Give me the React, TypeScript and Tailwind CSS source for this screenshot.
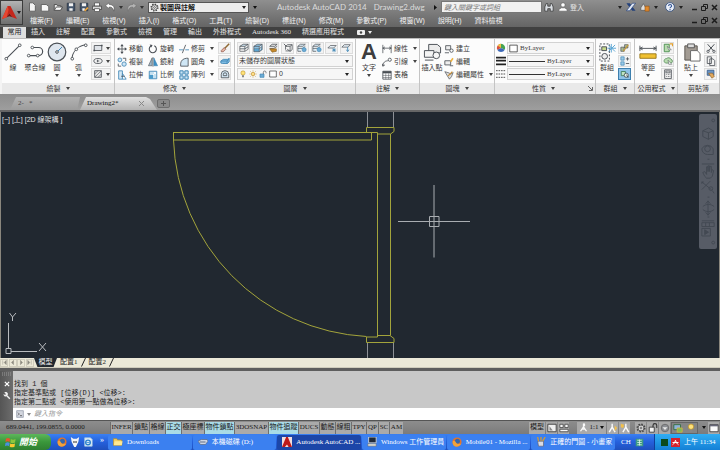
import type { ReactNode } from "react";

const CJK = "font-['Liberation_Sans','Noto_Sans_CJK_TC',sans-serif]";
const SERIF = "font-['Liberation_Serif','Noto_Sans_CJK_TC',serif]";
const MONO = "font-['Liberation_Mono','Noto_Sans_CJK_TC',monospace]";

const blue = "#3f86b5";
const dark = "#4a4f55";

/* Small tool glyphs, all drawn on a 12 x 12 grid. */
const glyphs: Record<string, ReactNode> = {
  new: <path d="M3 1h4l3 3v7H3z" fill="#f4f4f4" stroke="#555" />,
  sheet: <path d="M1.500 3h6l3 2.500V11h-9z" fill="#f7f7f7" stroke="#555" />,
  open: <><path d="M1.500 10V3h3l1 1.500h4V6" fill="#e8e8e8" stroke="#444" /><path d="M1.500 10l2.500-4h7.500L9 10z" fill="#fafafa" stroke="#444" /></>,
  save: <><path d="M1.500 1.500h9v9h-9z" fill="#43546a" stroke="#2b3646" /><path d="M3.500 1.500h5v3.500h-5zM4 7.500h4v3H4z" fill="#f1f1f1" /></>,
  saveas: <><path d="M1.500 1.500h9v9h-9z" fill="#43546a" stroke="#2b3646" /><path d="M3.500 1.500h5v3.500h-5zM4 7.500h3v3H4z" fill="#f1f1f1" /><path d="M6 10l4-4 1.500 1.500-4 4z" fill="#e9a23b" /></>,
  print: <><path d="M3 1h6v4H3z" fill="#fff" stroke="#555" /><path d="M.5 5h11v4H.5z" fill="#d8d8d8" stroke="#444" /><path d="M3 8h6v3.500H3z" fill="#fff" stroke="#555" /></>,
  undo: <path d="M5 1L.5 4.500 5 8V6c3 0 4.500 1 5.500 5 1.500-4 0-8-5.500-8z" fill="#fff" stroke="#555" strokeWidth=".7" />,
  redo: <path d="M7 1l4.500 3.500L7 8V6C4 6 2.500 7 1.500 11 0 7 1.500 3 7 3z" fill="#b4b4b4" stroke="#707070" strokeWidth=".7" />,
  gear: <><circle cx="6" cy="6" r="4.500" fill="none" stroke="#444" strokeWidth="1.800" strokeDasharray="1.900 1.600" /><circle cx="6" cy="6" r="3.500" fill="#eee" stroke="#444" /><circle cx="6" cy="6" r="1.200" fill="#fff" stroke="#444" /></>,
  rect: <><path d="M1.500 3h9v6h-9z" fill="#dfe3e8" stroke={dark} /><path d="M.5 8h2v2h-2zM9.500 2h2v2h-2z" fill={dark} /></>,
  ellipse: <><ellipse cx="6" cy="6" rx="5" ry="3" fill="none" stroke={dark} /><path d="M5.500 4.500v3M4.500 6h3" stroke={dark} /></>,
  hatch: <><path d="M2 2h8v8H2z" fill="#e4e4e4" stroke={dark} /><path d="M2 6l4-4M2 10l8-8M6 10l4-4" stroke={dark} strokeWidth=".7" /></>,
  move: <><path d="M6 1v10M1 6h10" stroke={dark} /><path d="M6 0L4 2.700h4zM6 12L4 9.300h4zM0 6l2.700-2v4zM12 6L9.300 4v4z" fill={dark} /></>,
  rotate: <><path d="M7.500 2.200A4.300 4.300 0 1 1 3.500 2.500" fill="none" stroke={dark} strokeWidth="1.300" /><path d="M2 .5l3.500.7-1.500 3z" fill={dark} /></>,
  trim: <><path d="M0 7h5M7.500 7H12" stroke={blue} /><path d="M4 11L8 1" stroke={dark} /></>,
  copy: <><circle cx="3.500" cy="3.500" r="2.300" fill="#cfe6f5" stroke={blue} /><circle cx="8.500" cy="8.500" r="2.600" fill="#cfe6f5" stroke={blue} /><path d="M7 1.500h3.500V5M1.500 8v3H5" fill="none" stroke={dark} /></>,
  mirror: <><path d="M5 1v9.500H.5z" fill="#9fb7c8" stroke={dark} strokeWidth=".7" /><path d="M7 1v9.500h4.500z" fill="#3c8fc4" stroke={blue} strokeWidth=".7" /><path d="M6 0v12" stroke={dark} strokeWidth=".6" /></>,
  fillet: <path d="M2 11V7.500C2.500 4 5 2 9 1.500h2V11z" fill="#cfe6f5" stroke={dark} />,
  stretch: <><path d="M2 1h4.500v10H2z" fill="#d5e9f5" stroke={blue} /><path d="M6.500 4L11 11H6.500z" fill="#fff" stroke={blue} /><path d="M5 7.500h4" stroke={dark} /></>,
  scale: <><path d="M1.500 1.500h9v9h-9z" fill="#c5e0f0" stroke={blue} /><path d="M1.500 6h4.500v4.500H1.500z" fill="#4a9aca" /><path d="M6 6l3-3M7 3h2v2" fill="none" stroke="#fff" /></>,
  array: <path d="M1 1h4v4H1zM7 1h4v4H7zM1 7h4v4H1zM7 7h4v4H7z" fill="#cbe4f4" stroke={blue} strokeWidth="1.200" />,
  erase: <><path d="M11 1L5.500 6.500" stroke="#8f6a34" strokeWidth="1.800" /><path d="M5 5.500L7 7.500l-3 3H1.500V9z" fill="#e4b2a0" stroke="#7c4034" strokeWidth=".7" /></>,
  explode: <><path d="M1 6l3-2 5 0 2-1v4l-2 2H3L1 8.500z" fill="#7dbbe2" stroke={blue} /><path d="M1 6h7.500L11 3M8.500 6v3" stroke={blue} fill="none" /></>,
  offset: <path d="M1.500 10.500v-4a4.500 4.500 0 0 1 9 0v4zM4 8V6.500a2 2 0 0 1 4 0V8z" fill="#d6e9f5" stroke={dark} />,
  layers: <><path d="M1 4l4-2.500h6L7 4zM1 7l6 0 4-2.500" fill="#cfe4f2" stroke={dark} strokeWidth=".9" /><path d="M1 10h6l4-2.500M1 4v6M7 4v6M11 1.500v6" fill="none" stroke={dark} strokeWidth=".8" /></>,
  layersBlue: <><path d="M1 4l4-2.500h6L7.500 4zM1 4v3h6.500V4M7.500 7L11 4.500v-3" fill="#8fc2e2" stroke={dark} strokeWidth=".8" /><path d="M1 7v3.500h6.500V7M7.500 10.500L11 8V4.500" fill="#5aa3d0" stroke={dark} strokeWidth=".8" /></>,
  layersGold: <><path d="M2 4l3-2.500h6L8 4zM2 6.500h5l4-2.500" fill="#e6e6e6" stroke={dark} strokeWidth=".9" /><path d="M2 7l3 4 5-1V7z" fill="#c98b2b" stroke="#7b5418" strokeWidth=".7" /></>,
  layersOff: <><path d="M3 4l2.500-2h5.500L8.500 4zM3 4v4M8.500 4v6L11 8V2M3 9.500h5.500" fill="none" stroke={dark} strokeWidth=".9" /><path d="M1 1l3 3M5 7l3 3" stroke={dark} /></>,
  layersBulb: <><path d="M1 4l3-2.500h6L7 4zM1 6.500h6l3-2.500M1 4v6h4" fill="#d7e9f4" stroke={dark} strokeWidth=".8" /><circle cx="8.500" cy="8" r="2.500" fill="#6aaad3" stroke={blue} strokeWidth=".7" /></>,
  layersSnow: <><path d="M1 6l3-3h7L8 6z" fill="#e6eff5" stroke={dark} strokeWidth=".8" /><path d="M6 8.500h5M8.500 6v5M6.800 6.800l3.400 3.400M10.200 6.800L6.800 10.200" stroke={blue} strokeWidth=".9" /></>,
  layersLock: <><path d="M1 5l3-3h7L8.500 5z" fill="#e6eff5" stroke={dark} strokeWidth=".8" /><path d="M8 5v4.500M6.500 8L8 10.500 9.500 8" stroke={blue} fill="none" /></>,
  bulb: <><circle cx="6" cy="4.500" r="3.200" fill="#ffe27a" stroke="#b58a1c" strokeWidth=".8" /><path d="M4.500 8h3v3h-3z" fill="#888" /></>,
  sun: <><circle cx="6" cy="6" r="2.500" fill="#ffe08a" stroke="#c59631" /><path d="M6 .5v2M6 9.500v2M.5 6h2M9.500 6h2M2 2l1.500 1.500M8.500 8.500L10 10M10 2L8.500 3.500M2 10l1.500-1.500" stroke="#c59631" strokeWidth=".9" /></>,
  unlock: <><path d="M1.500 6h6v5h-6z" fill="#6cacd4" stroke={blue} /><path d="M6.500 6V3.500a2 2 0 0 1 4 0V5" fill="none" stroke={dark} /></>,
  swatch: <path d="M1 1.500h10v9H1z" fill="#fff" stroke="#333" />,
  dim: <path d="M1 1v10M11 1v10M1 5h10M3.500 3.500L1 5l2.500 1.500M8.500 3.500L11 5 8.500 6.500" fill="none" stroke={dark} strokeWidth=".9" />,
  leader: <><path d="M1 11c1-5 2-6 6-6.500M.5 8l.5 3 2.500-1.500" fill="none" stroke={dark} /><circle cx="9.300" cy="3.300" r="1.900" fill="none" stroke={dark} /></>,
  table: <><path d="M1 1.500h10v9.500H1z" fill="#fff" stroke={dark} /><path d="M1 1.500h10V4H1z" fill={dark} /><path d="M1 6.500h10M1 9h10M4.500 4v7M8 4v7" stroke={dark} strokeWidth=".6" /></>,
  block: <><path d="M2 2h6v5H2z" fill="#eee" stroke={dark} /><circle cx="9" cy="8" r="2" fill="#fff" stroke={dark} /><path d="M1 10.500h5" stroke={dark} /></>,
  blockEdit: <><path d="M1 4.500h7v5H1z" fill="#eee" stroke={dark} /><path d="M7 5l3-4 1.500 1L9 6z" fill="#f0b23d" /><path d="M7 10.500h4" stroke={dark} /></>,
  attr: <><path d="M1 2l3 5 2.500 4L9 8l2-5-3 2-2-1.500z" fill="#dcdcdc" stroke={dark} strokeWidth=".8" /><path d="M5 7l5-5" stroke="#c98b2b" strokeWidth="1.300" /></>,
  groupEdit: <><path d="M1 5h4v5H1zM5.500 2h4v4h-4z" fill="#a9b98f" stroke={dark} strokeWidth=".8" /><path d="M4 10l6-8" stroke="#c69a3c" strokeWidth="1.400" /></>,
  groupAdd: <><path d="M1 1h4v4H1zM1 7h4v4H1z" fill="#9cc9e6" stroke={blue} strokeWidth=".8" /><path d="M7 3.500h4M9 1.500v4M7 9h4" stroke={dark} /></>,
  groupSel: <><path d="M1.500 3h5v5h-5z" fill="#bfe3c4" stroke="#3c7a56" /><circle cx="7.500" cy="7.500" r="2.500" fill="#e9f5ea" stroke={dark} /><path d="M7 6l4 4-2 .3z" fill={dark} /></>,
  pick: <><path d="M1.500 1.500h6v9h-6z" fill="#b9dcb0" stroke="#3f8745" /><path d="M5 4l5 4-3 .3z" fill="#fff" stroke={dark} strokeWidth=".6" /><path d="M8 1h3.500v3" stroke="#e5a12d" strokeWidth="1.500" fill="none" /></>,
  cloud: <><path d="M1.500 7a3 3 0 0 1 3-4 3 3 0 0 1 5 1 2.300 2.300 0 0 1 0 4.500H3z" fill="#b9dcb0" stroke="#3f7b45" strokeWidth=".8" /><path d="M6 5l4.500 5H7z" fill="#fff" stroke={dark} strokeWidth=".6" /></>,
  calc: <><path d="M2 1h8v10.500H2z" fill="#eee" stroke={dark} /><path d="M3.500 2.500h5v2h-5zM4 6.500h1M6 6.500h1M8 6.500h.7M4 9h1M6 9h1M8 9h.7" stroke={dark} fill="#fff" strokeWidth=".9" /></>,
  cut: <><path d="M2 1.500l7 8M10 1.500l-7 8" stroke={dark} strokeWidth="1.200" /><circle cx="2.500" cy="10" r="1.400" fill="none" stroke={dark} /><circle cx="9.500" cy="10" r="1.400" fill="none" stroke={dark} /></>,
  copyclip: <path d="M1.500 1h5v8h-5zM4.500 3.500h4l2 2v6h-6z" fill="#f4f4f4" stroke={dark} />,
  matchprop: <><path d="M1.500 1.500h8v6h-8z" fill="#6b94c5" stroke="#365b8a" /><path d="M3 5l4 6 3-2-2-4z" fill="#e2a95f" stroke="#865c22" strokeWidth=".7" /></>,
  wheel: <><path d="M6 6V1a5 5 0 0 1 4.500 7z" fill="#46a352" /><path d="M6 6l4.500 2a5 5 0 0 1-9 0z" fill="#3c68b8" /><path d="M6 6L1.500 8A5 5 0 0 1 6 1z" fill="#d8523d" /><path d="M6 1a5 5 0 0 0-4 2l4 3z" fill="#efc445" /></>,
  lines: <path d="M0 2h12M0 5.500h12M0 10h12" stroke="#222" strokeWidth="2" />,
  dashes: <path d="M0 2h12M0 6h12M0 10h12" stroke="#555" strokeWidth="1.200" strokeDasharray="2 1" />,
  search: <path d="M1 11V6l1.500-4h2V5h3V2h2L11 6v5H7.500V8h-3v3z" fill="#d9dde2" stroke="#333" strokeWidth=".9" />,
  user: <><circle cx="6" cy="3.500" r="2.600" fill="#fff" stroke="#555" strokeWidth=".7" /><path d="M1 11V9l3-2h4l3 2v2z" fill="#fff" stroke="#555" strokeWidth=".7" /></>,
  exchange: <><path d="M.5 1.500h4L11.500 10.500h-4z" fill="#23407a" /><path d="M11.500 1.500h-4L.5 10.500h4z" fill="#dfe7f4" stroke="#23407a" strokeWidth=".8" /></>,
  house: <><path d="M1 10V7l3-5 3 5v3z" fill="#ddd" stroke="#555" strokeWidth=".8" /><path d="M6 5h5v6H6z" fill="#e08a2e" stroke="#8e4f12" strokeWidth=".7" /></>,
  help: <><circle cx="6" cy="6" r="5.300" fill="#e9eef7" stroke="#36527f" strokeWidth="1" /><path d="M4.300 4.800c0-2.400 3.600-2.400 3.600 0C7.900 6.200 6 6 6 7.500M6 8.500v1.300" fill="none" stroke="#2b4f93" strokeWidth="1.300" /></>,
  wrench: <path d="M2 1a3 3 0 0 1 4.500 4l4.500 4.500-1.500 1.500L5 6.500A3 3 0 0 1 1 3l2 1.500L4.500 3z" fill="#f1f1f1" />,
  prompt: <><path d="M1 1h10v10H1z" fill="#d4d7df" stroke="#888fa0" /><path d="M3 4l2 2-2 2M6 8.500h3" fill="none" stroke="#333" /></>,
  page: <><path d="M1 1.500h10v9H1z" fill="#eee" stroke="#333" /><path d="M3 9V4l4 5z" fill="#888" /></>,
  tiles: <path d="M1 1.500h4v4H1zM7 1.500h4v4H7zM1 7.500h10v3H1z" fill="#f5f5f5" stroke="#444" />,
  scaleA: <path d="M6 1v4L2 11M6 5l4 6M4 8h4M6 1a1 1 0 0 1 0 3" fill="none" stroke="#fafafa" strokeWidth="1.700" />,
  scaleGold: <><path d="M5 1v4L1.500 11M5 5l3.500 6" fill="none" stroke="#fafafa" strokeWidth="1.700" /><path d="M8 3l3 3-3 4z" fill="#f1bf4b" /></>,
  scaleAuto: <><path d="M7 1v4L3.500 11M7 5l3.500 6" fill="none" stroke="#fafafa" strokeWidth="1.700" /><path d="M1 1l4 1-1 4-3-1z" fill="#f1bf4b" /></>,
  padlock: <><path d="M1.500 5h6v6h-6z" fill="#f4f4f4" stroke="#333" /><path d="M6 5V3a2 2 0 0 1 4.500 0v3" fill="none" stroke="#333" strokeWidth="1.300" /></>,
  orb: <><circle cx="6" cy="6" r="4.500" fill="#8c8f94" stroke="#666" /><path d="M3 5h6L6 8.500z" fill="#e8e8e8" /></>,
  monitor: <><path d="M1 2h8v6H1z" fill="#8db2d9" stroke="#2f6b36" /><path d="M5 6h6v5H5z" fill="#7cba5b" stroke="#d5b240" /></>,
  clean: <><path d="M1 2h10v8.500H1z" fill="#fafafa" stroke="#333" /><path d="M1 2h10v2H1z" fill="#667" /></>,
  folder: <><path d="M.5 10V2h4l1 1.500h5V10z" fill="#f3cf62" stroke="#b98d22" strokeWidth=".8" /><path d="M1 10l1-5h9.500l-1 5z" fill="#ffe891" /></>,
  disk: <><path d="M0 5l4-2h7l1 2-3 4H3z" fill="#cdd6e3" stroke="#51627e" strokeWidth=".8" /><path d="M2 6h7" stroke="#4a5a77" /></>,
  acad: <><path d="M0 0h12v12H0z" fill="#f0dede" /><path d="M0 12L5 0h2l5 12H8L6 9 3.500 12z" fill="#bf1a1a" /></>,
  task: <><path d="M2 0h9v7H2z" fill="#202a38" stroke="#d9dde3" /><path d="M1 8h10v3H1z" fill="#dcdcd2" stroke="#666" strokeWidth=".6" /></>,
  firefox: <><circle cx="6" cy="6" r="5.500" fill="#e3742a" /><circle cx="6.500" cy="5" r="3" fill="#3468ad" /><path d="M1 5c2-1 3 0 4 2s3 1 5 1-1 3-4 3.500S0 9 1 5z" fill="#f2a23b" /></>,
  paint: <><path d="M2 5h7v6H3z" fill="#d8dbe4" stroke="#556" strokeWidth=".7" /><path d="M3 5L2 0M6 5V0M8 5l3-5" stroke="#d99a2e" strokeWidth="1.500" /></>,
  fox: <><path d="M1 0l3 2h4l3-2-1 6-3 6H5L2 6z" fill="#f4f4f4" /><path d="M4 5h1.500v2H4zM6.500 5H8v2H6.500z" fill="#222" /></>,
  ie: <><path d="M2 1h7l2 2v8H2z" fill="#e7f1fa" stroke="#9cc0df" /><circle cx="6" cy="6.500" r="2.800" fill="none" stroke="#2c83cd" strokeWidth="1.600" /><path d="M4 6.500h4" stroke="#2c83cd" /></>,
  ime: <><path d="M1 1h10v10H1z" fill="#3f9b83" /><path d="M3 3h6M3 6h6M6 2v8M3 9h6" stroke="#e4f7ef" /></>,
  green: <path d="M0 0h12v12H0z" fill="#0b4a1c" />,
  avira: <><path d="M0 0h12v12H0z" fill="#d5222d" /><path d="M2 9c2-1 3-3 4-6 1 3 2 5 4 6M2 6h8" fill="none" stroke="#fff" strokeWidth="1.300" /></>,
};

function Icon({ name, cls = "size-[10px]" }: { name: string; cls?: string }) {
  return (
    <svg viewBox="0 0 12 12" className={`${cls} shrink-0`} fill="none" aria-hidden="true">
      {glyphs[name]}
    </svg>
  );
}

function Caret({ cls = "text-[#444]" }: { cls?: string }) {
  return (
    <svg viewBox="0 0 4 3" className={`h-[3px] w-[4px] shrink-0 ${cls}`} aria-hidden="true">
      <path d="M0 0h4L2 3z" fill="currentColor" />
    </svg>
  );
}

function Panel({ title, width, children, more = true, corner = false }: { title: string; width: string; children: ReactNode; more?: boolean; corner?: boolean }) {
  return (
    <section className={`flex shrink-0 flex-col border-r border-[#c4c4c4] ${width}`}>
      <div className="flex h-[44px] bg-[#fcfcfc] pt-[3px]">{children}</div>
      <div className="flex h-[11px] items-center justify-center gap-[5px] bg-[#e9e9e9] text-[#333]">
        {corner && <span className="w-[32px]" />}
        <span>{title}</span>
        {more && <Caret />}
        {corner && (
          <button aria-label="性質對話方塊" className="ml-auto mr-[2px]">
            <svg viewBox="0 0 5 5" className="size-[5px]"><path d="M0 0l4 4M4.500 1v3.500H1" fill="none" stroke="#666" /></svg>
          </button>
        )}
      </div>
    </section>
  );
}

function Tool({ icon, label, caret, cls = "" }: { icon: string; label: string; caret?: boolean; cls?: string }) {
  return (
    <button className={`flex h-[13px] items-center gap-[2px] whitespace-nowrap ${cls}`}>
      <Icon name={icon} />
      <span>{label}</span>
      {caret && <span className="ml-[3px] flex"><Caret /></span>}
    </button>
  );
}

function SmallTool({ icon, active, caret }: { icon: string; active?: boolean; caret?: boolean }) {
  return (
    <button
      aria-label={icon}
      className={`flex h-[12px] items-center justify-center gap-[3px] border ${caret ? "w-[20px]" : "w-[13px]"} ${active ? "border-[#3d7fae] bg-[#8fc3e8]" : "border-[#dcdcdc] bg-[#f3f3f3]"}`}
    >
      <Icon name={icon} />
      {caret && <Caret />}
    </button>
  );
}

function BigTool({ label, caret, width, children }: { label: string; caret?: boolean; width: string; children: ReactNode }) {
  return (
    <button className={`flex h-[38px] flex-col items-center ${width}`}>
      <span className="flex h-[20px] items-center justify-center">{children}</span>
      <span className="mt-[1px] h-[9px] whitespace-nowrap leading-[9px]">{label}</span>
      {caret && <span className="mt-[2px] flex"><Caret /></span>}
    </button>
  );
}

function Field({ label, value, children, cls = "" }: { label: string; value: string; children?: ReactNode; cls?: string }) {
  return (
    <div className={`flex h-[12px] items-center gap-[2px] border border-[#d2d2d2] bg-[#f6f6f6] px-[1px] ${cls}`}>
      {children}
      <select aria-label={label} className="h-[10px] min-w-0 flex-1 appearance-none bg-transparent leading-[10px] outline-none">
        <option>{value}</option>
      </select>
      <Caret cls="text-[#222] mr-[2px]" />
    </div>
  );
}

function WindowButtons() {
  return (
    <div className="flex items-center gap-[3px] pr-[2px]">
      <button aria-label="最小化">
        <svg viewBox="0 0 7 7" className="size-[7px]"><path d="M1 5.500h5" stroke="#1c1c1c" strokeWidth="1.500" /></svg>
      </button>
      <button aria-label="還原">
        <svg viewBox="0 0 7 7" className="size-[7px]" fill="none"><path d="M2.500 2.500v-2h4v4h-2M.5 2.500h4v4h-4z" stroke="#1c1c1c" /></svg>
      </button>
      <button aria-label="關閉">
        <svg viewBox="0 0 7 7" className="size-[7px]"><path d="M1 1l5 5M6 1L1 6" stroke="#1c1c1c" strokeWidth="1.500" /></svg>
      </button>
    </div>
  );
}

const menus = ["檔案(F)", "編輯(E)", "檢視(V)", "插入(I)", "格式(O)", "工具(T)", "繪製(D)", "標註(N)", "修改(M)", "參數式(P)", "視窗(W)", "說明(H)", "資料檢視"];
const ribbonTabs = ["插入", "註解", "配置", "參數式", "檢視", "管理", "輸出", "外掛程式", "Autodesk 360", "精選應用程式"];
const quick = ["new", "sheet", "open", "save", "saveas", "print", "undo"];

function Header() {
  return (
    <header className="flex bg-linear-to-b from-[#8f8f8f] to-[#656565]">
      <button aria-label="應用程式功能表" className="flex h-[25px] w-[23px] shrink-0 items-center border border-[#3c3c3c] bg-linear-to-b from-[#b4b4b4] to-[#6e6e6e]">
        <svg viewBox="0 0 16 16" className="ml-[1px] size-[15px]">
          <path d="M0 15L6 1h3l7 14-5-2-3-4-3 4z" fill="#c5271b" />
          <path d="M6 1L0 15l5-2 2-8z" fill="#e8452f" />
          <path d="M5 13l3-4 3 4-3-1z" fill="#74100b" />
        </svg>
        <Caret cls="text-[#222]" />
      </button>
      <div className="min-w-0 flex-1">
        <div className="flex h-[14px] items-center">
          <div className="ml-[4px] flex items-center gap-[3px]">
            {quick.map((q) => (
              <button key={q} aria-label={q}><Icon name={q} /></button>
            ))}
            <Caret cls="text-[#333] mx-[1px]" />
            <button aria-label="redo"><Icon name="redo" /></button>
            <Caret cls="text-[#333]" />
          </div>
          <div className="ml-[4px] flex h-[11px] w-[101px] shrink-0 items-center border border-[#555] bg-[#ececec] text-[#111]">
            <Icon name="gear" cls="ml-[1px] size-[9px]" />
            <select aria-label="工作區" className="h-[9px] min-w-0 flex-1 appearance-none bg-transparent pl-[1px] font-bold leading-[9px] outline-none">
              <option>製圖與註解</option>
            </select>
            <Caret cls="text-[#222] mr-[2px]" />
          </div>
          <span className="ml-[4px] flex"><Caret cls="text-[#111]" /></span>
          <h1 className="ml-[20px] flex gap-[7px] whitespace-nowrap font-['Lato',sans-serif] text-[8px] text-[#dcdcdc]">
            <span>Autodesk AutoCAD 2014</span>
            <span>Drawing2.dwg</span>
          </h1>
          <div className="ml-auto flex items-center whitespace-nowrap">
            <svg viewBox="0 0 3 5" className="mr-[4px] h-[5px] w-[3px]"><path d="M0 0v5l3-2.500z" fill="#111" /></svg>
            <input aria-label="搜尋" placeholder="鍵入關鍵字或詞組" className="h-[12px] w-[101px] border border-[#777] bg-[#f1f1f1] pl-[2px] italic placeholder:text-[#777]" />
            <button aria-label="尋找" className="ml-[2px]"><Icon name="search" /></button>
            <button className="ml-[4px] flex items-center gap-[2px] text-[#e6e6e6]"><Icon name="user" />登入</button>
            <div className="ml-[34px] flex items-center gap-[4px]">
              <Caret cls="text-[#222]" />
              <Icon name="exchange" />
              <Icon name="house" />
              <Caret cls="text-[#222] mr-[3px]" />
              <Icon name="help" />
              <Caret cls="text-[#222]" />
            </div>
            <div className="ml-[8px]"><WindowButtons /></div>
          </div>
        </div>
        <nav className="flex h-[13px] items-center gap-[13px] whitespace-nowrap pl-[7px] text-[#f2f2f2]">
          {menus.map((m) => <button key={m}>{m}</button>)}
          <div className="ml-auto"><WindowButtons /></div>
        </nav>
      </div>
    </header>
  );
}

function RibbonTabs() {
  return (
    <div className={`flex h-[11px] items-center gap-[11px] whitespace-nowrap bg-[#404040] pl-[3px] text-[#e4e4e4] ${SERIF}`}>
      <button className="-mr-[6px] h-full w-[23px] bg-[#dedede] text-[#222]">常用</button>
      {ribbonTabs.map((t) => <button key={t}>{t}</button>)}
      <button aria-label="顯示選項" className="ml-[2px] flex items-center gap-[3px]">
        <svg viewBox="0 0 8 5" className="h-[5px] w-[8px]"><rect width="8" height="5" rx="1" fill="#eee" /><circle cx="4" cy="2.500" r="1.200" fill="#444" /></svg>
        <Caret cls="text-[#eee]" />
      </button>
    </div>
  );
}

function Ribbon() {
  return (
    <div className="flex border-t border-[#bbb] bg-[#f4f4f4] pl-[2px] text-[#3a3a3a]">
      <Panel title="繪製" width="w-[113px]">
        <BigTool label="線" width="w-[22px]">
          <svg viewBox="0 0 20 20" className="size-[18px]" fill="none"><path d="M2 18L18 2" stroke={dark} strokeWidth="1.200" /><circle cx="2.500" cy="17.500" r="1.500" fill="#fff" stroke={dark} /><circle cx="17.500" cy="2.500" r="1.500" fill="#fff" stroke={dark} /></svg>
        </BigTool>
        <BigTool label="聚合線" width="w-[22px]">
          <svg viewBox="0 0 20 20" className="size-[18px]" fill="none"><path d="M8 5h6a4 4 0 0 1 0 9H2" stroke={dark} strokeWidth="1.300" /><circle cx="7" cy="5" r="1.500" fill="#fff" stroke={dark} /><circle cx="3" cy="14" r="1.500" fill="#fff" stroke={dark} /><circle cx="13" cy="14" r="1.500" fill="#fff" stroke={dark} /></svg>
        </BigTool>
        <BigTool label="圓" width="w-[22px]" caret>
          <svg viewBox="0 0 20 20" className="size-[20px]" fill="none"><circle cx="10" cy="10" r="8.800" fill="#dfe6ee" stroke={dark} strokeWidth="1.200" /><path d="M10 10l5-5" stroke={blue} /><circle cx="10" cy="10" r="1.300" fill="#fff" stroke={dark} /></svg>
        </BigTool>
        <BigTool label="弧" width="w-[21px]" caret>
          <svg viewBox="0 0 20 20" className="size-[18px]" fill="none"><path d="M2 18C3 9 9 3 18 2" stroke={dark} strokeWidth="1.200" /><circle cx="2.500" cy="17.500" r="1.500" fill="#fff" stroke={dark} /><circle cx="7" cy="7" r="1.500" fill="#fff" stroke={dark} /><circle cx="17.500" cy="2.500" r="1.500" fill="#fff" stroke={dark} /></svg>
        </BigTool>
        <div className="ml-[2px] flex flex-col gap-[1px]">
          <SmallTool icon="rect" caret />
          <SmallTool icon="ellipse" caret />
          <SmallTool icon="hatch" caret />
        </div>
      </Panel>
      <Panel title="修改" width="w-[120px]">
        <div className="grid h-[39px] grid-cols-[31px_31px_39px_13px] pl-[2px]">
          <Tool icon="move" label="移動" /><Tool icon="rotate" label="旋轉" /><Tool icon="trim" label="修剪" caret /><SmallTool icon="erase" />
          <Tool icon="copy" label="複製" /><Tool icon="mirror" label="鏡射" /><Tool icon="fillet" label="圓角" caret /><SmallTool icon="explode" />
          <Tool icon="stretch" label="拉伸" /><Tool icon="scale" label="比例" /><Tool icon="array" label="陣列" caret /><SmallTool icon="offset" />
        </div>
      </Panel>
      <Panel title="圖層" width="w-[121px]">
        <div className="flex w-full flex-col gap-[1px] px-[2px]">
          <div className="flex justify-between">
            {["layers", "layersBlue", "layersGold", "layersOff", "layersBulb", "layersBulb", "layersSnow", "layersLock"].map((n, i) => <SmallTool key={i} icon={n} />)}
          </div>
          <Field label="圖層狀態" value="未儲存的圖層狀態" />
          <Field label="圖層" value="0">
            <Icon name="bulb" cls="size-[8px]" /><Icon name="sun" cls="size-[8px]" /><Icon name="unlock" cls="size-[8px]" /><Icon name="swatch" cls="size-[8px]" />
          </Field>
        </div>
      </Panel>
      <Panel title="註解" width="w-[64px]">
        <BigTool label="文字" width="w-[26px]" caret>
          <span className="text-[22px] font-bold leading-[20px] text-[#3d3d3d]">A</span>
        </BigTool>
        <div className="flex flex-col">
          <Tool icon="dim" label="線性" caret /><Tool icon="leader" label="引線" caret /><Tool icon="table" label="表格" />
        </div>
      </Panel>
      <Panel title="圖塊" width="w-[75px]">
        <BigTool label="插入點" width="w-[24px]">
          <svg viewBox="0 0 20 20" className="size-[19px]" fill="none"><path d="M6 1.500h9l3.500 3v6H6z" fill="#ececec" stroke={dark} /><path d="M1.500 8h10v7h-10z" fill="#f4f4f4" stroke={dark} /><circle cx="14" cy="13" r="3.500" fill="#f7f7f7" stroke={dark} /><path d="M2 18h9" stroke={dark} /></svg>
        </BigTool>
        <div className="flex flex-col">
          <Tool icon="block" label="建立" /><Tool icon="blockEdit" label="編輯" /><Tool icon="attr" label="編輯屬性" caret />
        </div>
      </Panel>
      <Panel title="性質" width="w-[101px]" corner>
        <div className={`flex w-full flex-col gap-[1px] px-[1px] ${SERIF}`}>
          <div className="flex items-center gap-[1px]"><Icon name="wheel" /><Field label="物件顏色" value="ByLayer" cls="flex-1"><Icon name="swatch" cls="size-[9px]" /></Field></div>
          <div className="flex items-center gap-[1px]"><Icon name="lines" /><Field label="線粗" value="ByLayer" cls="flex-1"><span className="h-px w-[36px] shrink-0 bg-[#333]" /></Field></div>
          <div className="flex items-center gap-[1px]"><Icon name="dashes" /><Field label="線型" value="ByLayer" cls="flex-1"><span className="h-px w-[36px] shrink-0 bg-[#333]" /></Field></div>
        </div>
      </Panel>
      <Panel title="群組" width="w-[39px]">
        <BigTool label="群組" width="w-[22px]">
          <svg viewBox="0 0 20 20" className="size-[19px]" fill="none"><path d="M2 1h10v18H2z" stroke={dark} strokeDasharray="2 1.500" /><path d="M4 4h5v4H4z" fill="#c6d98a" stroke={dark} /><circle cx="7" cy="14" r="3" fill="#eee" stroke={dark} /><path d="M14 1v9M10 5.500h9M11 2l7 7M18 2l-7 7" stroke="#5aa5d4" /></svg>
        </BigTool>
        <div className="flex flex-col gap-[1px]">
          <SmallTool icon="groupEdit" /><SmallTool icon="groupAdd" /><SmallTool icon="groupSel" active />
        </div>
      </Panel>
      <Panel title="公用程式" width="w-[43px]">
        <BigTool label="等距" width="w-[26px]" caret>
          <svg viewBox="0 0 20 20" className="size-[18px]" fill="none"><path d="M1 3v6M19 3v6M1 6h18M4 4.500L1 6l3 1.500M16 4.500L19 6l-3 1.500" stroke={dark} /><path d="M1 12h18v5H1z" fill="#f0c030" stroke="#967416" /></svg>
        </BigTool>
        <div className="flex flex-col gap-[1px]">
          <SmallTool icon="pick" /><SmallTool icon="cloud" /><SmallTool icon="calc" />
        </div>
      </Panel>
      <Panel title="剪貼簿" width="w-[42px]" more={false}>
        <BigTool label="貼上" width="w-[26px]" caret>
          <svg viewBox="0 0 20 20" className="size-[19px]" fill="none"><path d="M3 3h13v15H3z" fill="#a29b93" stroke="#59544e" /><path d="M6 1h7v4H6z" fill="#ddd" stroke="#555" /><path d="M9 8h7l3 3v8H9z" fill="#fff" stroke="#666" /></svg>
        </BigTool>
        <div className="flex flex-col gap-[1px]">
          <SmallTool icon="cut" /><SmallTool icon="copyclip" /><SmallTool icon="matchprop" />
        </div>
      </Panel>
    </div>
  );
}

function FileTabs() {
  return (
    <div className={`flex h-[18px] items-end border-b-2 border-[#666] bg-linear-to-b from-[#8e8e8e] to-[#9e9e9e] pl-[10px] ${SERIF}`}>
      <button className="h-[13px] w-[70px] bg-linear-to-b from-[#b2b2b2] to-[#9c9c9c] pl-[8px] text-left text-[#444] [clip-path:polygon(6px_0,100%_0,96%_100%,0_100%)]">
        2- &nbsp;&nbsp;*
      </button>
      <div className="flex h-[13px] w-[77px] items-center bg-linear-to-b from-[#e0e0e0] to-[#b4b4b4] pl-[7px] text-[#111] [clip-path:polygon(6px_0,66px_0,70px_2px,100%_100%,0_100%)]">
        <button>Drawing2*</button>
        <button aria-label="關閉圖檔" className="ml-auto mr-[13px]">
          <svg viewBox="0 0 5 5" className="size-[5px]"><path d="M0 0l5 5M5 0L0 5" stroke="#888" /></svg>
        </button>
      </div>
      <button aria-label="新增圖檔" className="mb-[2px] flex h-[9px] w-[13px] items-center justify-center rounded-[2px] border border-[#6d6d6d] bg-[#8a8a8a]">
        <svg viewBox="0 0 5 5" className="size-[5px]"><path d="M2.500 0v5M0 2.500h5" stroke="#555" /></svg>
      </button>
    </div>
  );
}

function Canvas() {
  return (
    <main className="relative min-h-[246px] flex-1 overflow-hidden border-x border-[#8a877d] bg-[#212830]">
      {/* Door leaf, swing arc and frame */}
      <svg className="absolute -left-px top-0 h-[246px] w-[700px]" viewBox="0 112 700 246" fill="none" role="img" aria-label="門平面圖">
        <path d="M367.500 112v15M393.500 112v15M367.500 343v15M393.500 343v15" stroke="#8d9196" />
        <g stroke="#a3a43b">
          <path d="M366.500 132.500v-5h27.500v4l-3.500 2.500h-13" />
          <path d="M173 132.500h204.500v204.500h-11v5.500h27.500v-4l-4-3h-12.500M390.500 134v201.500" />
          <path d="M173.500 132.500v7.500h198v-7.500" />
          <path d="M173.500 140A204 204 0 0 0 366.500 336.500" />
        </g>
        <path d="M398 221.500h72M434 185v72.500M429.500 216.500h9.500v10h-9.500z" stroke="#a9adb1" />
      </svg>
      <p className="absolute left-[1px] top-[4px] whitespace-nowrap text-[#e4e4e4]">[−] [上] [2D 線架構 ]</p>
      {/* UCS axes */}
      <svg className="absolute bottom-0 left-0 h-[50px] w-[50px]" viewBox="1 308 50 50" fill="none" stroke="#b9bcbf">
        <path d="M8.500 323v25M6 348.500h5v5H6zM11 351.500h26M39 343l7 8M46 343l-7 8M9.500 313l3 4v4M16 313l-3.500 4" />
      </svg>
      <div className="absolute right-[2px] top-[2px] flex h-[135px] w-[18px] flex-col items-center rounded-[2px] bg-[#575c66]">
        <svg viewBox="0 0 19 135" className="h-[135px] w-[18px]" fill="none" stroke="#434953">
          <circle cx="15" cy="3" r="1.500" /><path d="M4 14l6-3 5 3v6l-5 3-6-3zM4 14l6 2 5-2M10 16v7" />
          <path d="M3 33a6.500 6 0 0 1 12 0v6H9a6 6 0 0 1-6-6z" /><circle cx="9" cy="33" r="3" />
          <path d="M3 49h13M9 44h2M9 84h2M9 105h2M3 109h13" />
          <path d="M6 62l-2-4 2-1 2 3V52h1.500v5V51H11v6l.5-5.500H13V58l1-3 1.500 1L14 62l-2 2H8zM3 68l10 8M12 67L3 76M3 70v-2h2" />
          <circle cx="12.500" cy="75" r="2" /><path d="M14 77l2 3M9.500 88v15M7 91l2.500-3 2.500 3M7 100l2.500 3 2.500-3M4 94c3-3 9-3 12 0M16 97c-3 3-9 3-12 0M3 111h13v4H3zM7 111v4M11 111v4M3 117h9v8H3z" />
          <path d="M6 118.500l4 2.500-4 2.500z" fill="#434953" /><circle cx="15" cy="132" r="1.500" />
        </svg>
      </div>
    </main>
  );
}

function TabSlash() {
  return <svg viewBox="0 0 5 9" className="h-[9px] w-[5px]" aria-hidden="true"><path d="M4.500 0L.5 8.500" stroke="#222" /></svg>;
}

function LayoutTabs() {
  return (
    <div className={`flex h-[10px] items-center border-b border-[#d0cdbd] bg-[#ece9d8] text-[#222] ${SERIF}`}>
      <div className="flex h-full w-[34px] items-center justify-around text-[#999]">
        {["M1 0v6M6 0L3 3l3 3z", "M5 0L2 3l3 3z", "M2 0l3 3-3 3z", "M6 0v6M1 0l3 3-3 3z"].map((d, i) => (
          <button key={i} aria-label="切換配置" className="flex h-[8px] w-[8px] items-center justify-center border border-[#d0cdbd]">
            <svg viewBox="0 0 7 6" className="size-[5px]"><path d={d} fill="#8c8a80" stroke="#8c8a80" strokeWidth=".6" /></svg>
          </button>
        ))}
      </div>
      <button className="h-full w-[23px] bg-[#212830] leading-[9px] text-[#f2f2f2] [clip-path:polygon(0_0,100%_0,85%_100%,15%_100%)]">模型</button>
      <div className="flex items-center gap-[3px] pl-[3px] leading-[9px]">
        <button>配置1</button><TabSlash /><button>配置2</button><TabSlash />
      </div>
    </div>
  );
}

function CommandLine() {
  return (
    <div className="flex h-[52px] border-t-[3px] border-[#5e5e5e] bg-[#c8c8c8]">
      <div className="flex w-[13px] shrink-0 flex-col items-center gap-[5px] bg-linear-to-r from-[#555] to-[#6d6d6d] pt-[1px]">
        <svg viewBox="0 0 9 4" className="h-[4px] w-[9px]"><path d="M0 1h9M0 3h9" stroke="#999" strokeDasharray="1 1" /></svg>
        <button aria-label="關閉指令行"><svg viewBox="0 0 7 7" className="size-[6px]"><path d="M1 1l5 5M6 1L1 6" stroke="#fff" strokeWidth="1.500" /></svg></button>
        <button aria-label="自訂"><Icon name="wrench" cls="size-[8px]" /></button>
      </div>
      <div className={`flex min-w-0 flex-1 flex-col justify-end text-[#222] ${MONO}`}>
        <p className="h-[9px] whitespace-pre pl-[1px] leading-[9px]">找到 1 個</p>
        <p className="h-[9px] whitespace-pre pl-[1px] leading-[9px]">指定基準點或 [位移(D)] &lt;位移&gt;:</p>
        <p className="mb-[1px] h-[9px] whitespace-pre pl-[1px] leading-[9px]">指定第二點或 &lt;使用第一點做為位移&gt;:</p>
        <label className="flex h-[12px] items-center gap-[3px] bg-white pl-[3px]">
          <Icon name="prompt" cls="size-[8px]" />
          <Caret cls="text-[#888]" />
          <input aria-label="指令" placeholder="鍵入指令" className="h-[11px] min-w-0 flex-1 bg-transparent italic outline-none placeholder:text-[#999]" />
        </label>
      </div>
    </div>
  );
}

const toggles: [string, string, boolean?][] = [
  ["INFER", "w-[22px]"], ["鎖點", "w-[17px]"], ["格線", "w-[16px]"], ["正交", "w-[16px]", true], ["極座標", "w-[23px]"],
  ["物件鎖點", "w-[30px]", true], ["3DOSNAP", "w-[34px]"], ["物件追蹤", "w-[30px]", true], ["DUCS", "w-[21px]"], ["動態", "w-[16px]"],
  ["線粗", "w-[16px]"], ["TPY", "w-[15px]"], ["QP", "w-[12px]"], ["SC", "w-[11px]"], ["AM", "w-[14px]"],
];

function StatusButton({ icon }: { icon: string }) {
  return <button aria-label={icon} className="flex h-[12px] w-[11px] items-center justify-center bg-[#a9a9a9]"><Icon name={icon} /></button>;
}

function StatusBar() {
  return (
    <div className={`flex h-[14px] items-center border-t border-[#555] bg-linear-to-b from-[#8d8d8d] to-[#7b7b7b] text-[#1a1a1a] ${SERIF}`}>
      <span className="w-[110px] shrink-0 whitespace-nowrap pl-[6px]">689.0441, 199.0855, 0.0000</span>
      {toggles.map(([t, w, on]) => (
        <button key={t} aria-pressed={!!on} className={`h-[12px] shrink-0 whitespace-nowrap border-l border-[#6f6f6f] ${w} ${on ? "bg-[#a9dbe6]" : "bg-[#aaaaaa]"}`}>{t}</button>
      ))}
      <div className="ml-auto flex items-center gap-[1px] pr-[1px]">
        <button className="h-[12px] w-[16px] bg-[#a9a9a9]">模型</button>
        <StatusButton icon="page" />
        <StatusButton icon="tiles" />
        <button className="ml-[7px] flex h-[12px] w-[29px] items-center justify-center gap-[2px] bg-[#a9a9a9]"><Icon name="scaleA" cls="size-[9px]" />1:1<Caret cls="text-[#111]" /></button>
        <StatusButton icon="scaleGold" />
        <StatusButton icon="scaleAuto" />
        <span className="ml-[4px] flex gap-[1px]"><StatusButton icon="gear" /><StatusButton icon="padlock" /><StatusButton icon="orb" /></span>
        <span className="flex h-[12px] items-center gap-[3px] border border-[#666] bg-[#858585] px-[1px]"><Icon name="monitor" /><Icon name="bulb" /></span>
        <span className="ml-[3px] mr-[1px] flex"><Caret cls="text-[#111]" /></span>
        <StatusButton icon="clean" />
      </div>
    </div>
  );
}

const tasks = [
  { icon: "folder", label: "Downloads" },
  { icon: "disk", label: "本機磁碟 (D:)" },
  { icon: "acad", label: "Autodesk AutoCAD ...", active: true },
  { icon: "task", label: "Windows 工作管理員" },
  { icon: "firefox", label: "Mobile01 - Mozilla ..." },
  { icon: "paint", label: "正確的門圖 - 小畫家" },
];

function Taskbar() {
  return (
    <footer className={`flex h-[16px] items-center bg-linear-to-b from-[#3a80f2] via-[#2560dc] to-[#1f50bd] text-white ${SERIF}`}>
      <button className="flex h-full w-[51px] shrink-0 items-center gap-[3px] rounded-r-[6px] bg-linear-to-b from-[#5db75b] via-[#3a973b] to-[#2f7f31] pl-[5px] text-[9px] font-bold italic">
        <svg viewBox="0 0 12 12" className="size-[11px]"><path d="M1 2c2-1.500 3-1 4.500 0L5 5.500C3.500 4.500 2 4.500.5 5.500z" fill="#e8552d" /><path d="M6.300 2.300c2 1 3 1 5.200 0L11 6c-2 1-3.500 1-5.200 0z" fill="#8cc63e" /><path d="M.5 6.500c2-1 3-1 4.500 0L4.500 10C3 9 1.500 9 0 10z" fill="#4a90e0" /><path d="M5.700 7c2 1 3 1 5.200 0l-.5 3.500c-2 1-3.500 1-5.200 0z" fill="#fbc92f" /></svg>
        開始
      </button>
      <div className="flex w-[57px] shrink-0 items-center gap-[3px] pl-[6px]">
        <Icon name="firefox" /><Icon name="fox" /><Icon name="ie" /><span className="ml-[4px] pb-[4px] text-[8px]">»</span>
      </div>
      <div className="flex min-w-0 flex-1 gap-[1px]">
        {tasks.map((t) => (
          <button key={t.label} className={`flex h-[15px] max-w-[84px] flex-1 items-center gap-[4px] whitespace-nowrap rounded-[2px] pl-[5px] ${t.active ? "bg-[#1c46a8]" : "bg-[#3b80f0]"}`}>
            <Icon name={t.icon} />
            <span>{t.label}</span>
          </button>
        ))}
      </div>
      <div className="flex w-[39px] shrink-0 items-center gap-[4px] pl-[6px]"><span>CH</span><Icon name="ime" cls="size-[9px]" /></div>
      <div className="flex h-full w-[66px] shrink-0 items-center gap-[3px] border-l border-[#0f3f9c] bg-linear-to-b from-[#30aef3] to-[#1480d6] pl-[6px]">
        <Icon name="green" cls="size-[7px]" /><Icon name="avira" cls="size-[9px]" />
        <time className="ml-[1px] whitespace-nowrap">上午 11:34</time>
      </div>
    </footer>
  );
}

export default function App() {
  return (
    <div className={`flex h-screen min-h-[450px] flex-col overflow-hidden bg-[#777] text-[7px] leading-none ${CJK}`}>
      <Header />
      <RibbonTabs />
      <Ribbon />
      <FileTabs />
      <Canvas />
      <LayoutTabs />
      <CommandLine />
      <StatusBar />
      <Taskbar />
    </div>
  );
}
